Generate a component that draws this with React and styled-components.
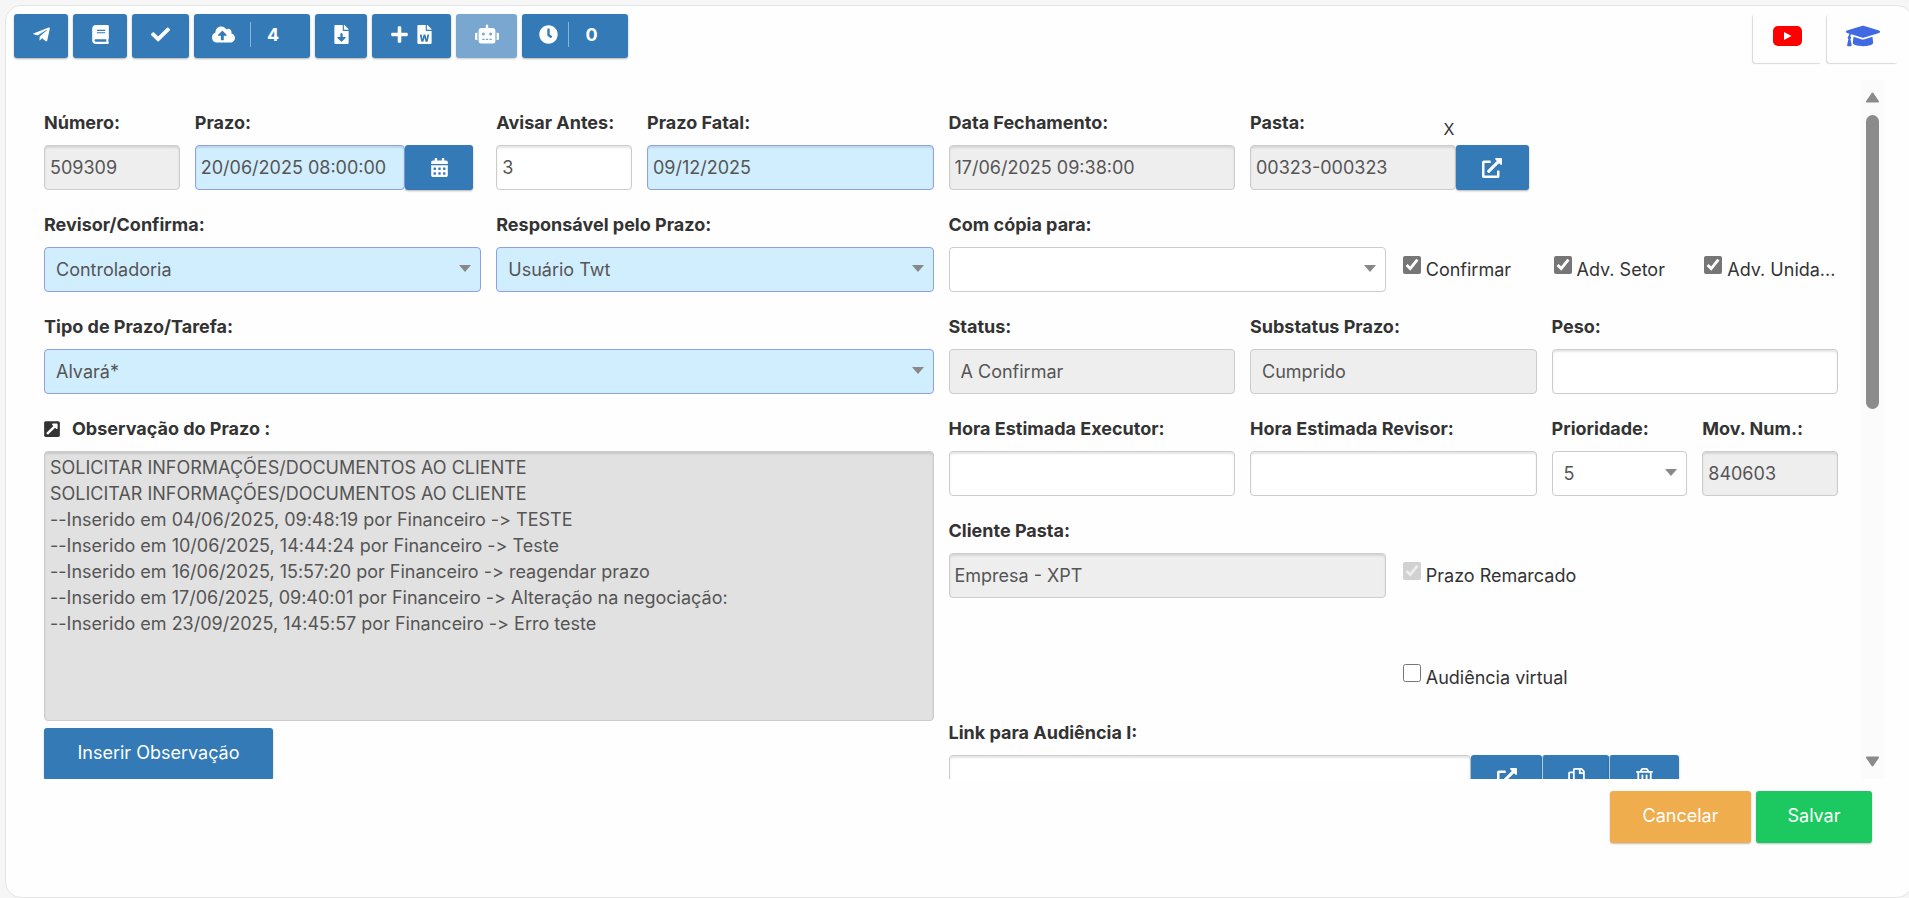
import React, { useState } from "react";
import styled, { createGlobalStyle, css } from "styled-components";
import {
  FaBook,
  FaCalendarAlt,
  FaCheck,
  FaClock,
  FaCloudUploadAlt,
  FaExternalLinkAlt,
  FaExternalLinkSquareAlt,
  FaFileDownload,
  FaFileWord,
  FaGraduationCap,
  FaPlus,
  FaRegCopy,
  FaRegTrashAlt,
  FaRobot,
  FaTelegramPlane,
} from "react-icons/fa";

const theme = {
  primary: "#337ab7",
  warning: "#f0ad4e",
  success: "#1bc960",
  textDark: "#333",
  textInput: "#555",
  border: "#ccc",
  requiredBorder: "#8f9fe8",
  requiredBg: "#d1eeff",
  disabledBg: "#eee",
};

const GlobalStyle = createGlobalStyle`
  * {
    box-sizing: border-box;
  }
  body {
    margin: 0;
    background-color: #f6f6f6;
    color: ${theme.textDark};
    font-family: Inter, "Open Sans", sans-serif;
    font-size: 18px;
    line-height: 26px;
  }
  button, input, select, textarea {
    font: inherit;
  }
`;

const Page = styled.div`
  height: 100vh;
  padding: 5px 0 0 5px;
  overflow: hidden;
`;
const Card = styled.main`
  display: flex;
  flex-direction: column;
  height: 100%;
  margin-right: -4px;
  padding-right: 4px;
  background-color: #fefefe;
  border: 1px solid #e4e4e4;
  border-radius: 16px;
`;

const Toolbar = styled.header`
  display: flex;
  justify-content: space-between;
  padding: 8px 10px 0 8px;
`;
const ButtonGroup = styled.div`
  display: flex;
  gap: 5px;
`;
const ToolButton = styled.button`
  display: flex;
  align-items: center;
  justify-content: center;
  gap: ${(props) => props.$gap || 0}px;
  width: ${(props) => props.$width}px;
  height: 44px;
  padding: 0 0 4px;
  border: none;
  border-radius: 3px;
  background-color: ${theme.primary};
  box-shadow: 0 1px 2px rgba(0, 0, 0, 0.3);
  color: #fff;
  cursor: pointer;
  &:disabled {
    opacity: 0.65;
  }
`;
const Counter = styled.span`
  display: flex;
  align-items: center;
  height: 25px;
  padding: 2px 13px 0 16px;
  border-left: 1px solid #8bb3d6;
  font-weight: 700;
`;
const HelpLink = styled.a`
  display: flex;
  align-items: center;
  justify-content: center;
  width: ${(props) => props.$width}px;
  height: 49px;
  padding-bottom: 5px;
  border-radius: 3px;
  box-shadow: -1px 1px 1px rgba(0, 0, 0, 0.15);
  color: #4169e1;
`;

const Body = styled.div`
  display: flex;
  flex: 1;
  min-height: 0;
  margin-top: 17px;
  padding-right: 24px;
`;
const Form = styled.form`
  display: grid;
  grid-template-columns: 1fr 1fr;
  column-gap: 15px;
  flex: 1;
  align-items: start;
  padding: 30px 23px 0 38px;
  overflow: hidden;
`;
const Half = styled.div`
  display: grid;
  grid-template-columns: repeat(6, minmax(0, 1fr));
  gap: 22px 15px;
`;
const Field = styled.div`
  grid-column: span ${(props) => props.$span};
`;
const LabelRow = styled.div`
  display: flex;
  align-items: center;
  height: 26px;
  margin-bottom: 9px;
`;
const Label = styled.label`
  font-weight: 700;
  white-space: nowrap;
`;
const ClearButton = styled.button`
  align-self: flex-end;
  height: 14px;
  margin-left: auto;
  margin-right: 82px;
  padding: 0;
  border: none;
  background: none;
  color: ${theme.textDark};
  font-size: 16px;
  line-height: 14px;
  cursor: pointer;
`;

const control = css`
  display: block;
  width: 100%;
  min-width: 0;
  height: 45px;
  border: 1px solid ${(props) => (props.$required ? theme.requiredBorder : theme.border)};
  border-radius: 4px;
  background-color: ${(props) => (props.$required ? theme.requiredBg : "#fff")};
  color: ${theme.textInput};
  opacity: 1;
  outline: none;
  &:disabled {
    background-color: ${theme.disabledBg};
  }
`;
const Input = styled.input`
  ${control}
  padding: 0 5px;
  box-shadow: inset 0 2px 2px rgba(0, 0, 0, 0.1);
`;
const Select = styled.select`
  ${control}
  padding: 0 26px 0 11px;
  appearance: none;
`;
const SelectWrapper = styled.div`
  position: relative;
  &::after {
    content: "";
    display: ${(props) => (props.$plain ? "none" : "block")};
    position: absolute;
    top: 18px;
    right: 10px;
    border: 6px solid transparent;
    border-top: 7px solid #888;
    border-bottom: none;
    pointer-events: none;
  }
`;
const TextArea = styled.textarea`
  ${control}
  height: 270px;
  padding: 3px 5px;
  box-shadow: inset 0 2px 2px rgba(0, 0, 0, 0.1);
  font-feature-settings: "calt" 0;
  resize: none;
  &:disabled {
    background-color: #e1e1e1;
  }
`;
const InputGroup = styled.div`
  display: flex;
  margin-right: 8px;
`;
const GroupButton = styled.button`
  display: flex;
  flex: none;
  align-items: center;
  justify-content: center;
  width: ${(props) => props.$width}px;
  height: 45px;
  padding: 0;
  border: none;
  border-radius: 3px;
  background-color: ${theme.primary};
  box-shadow: 0 1px 2px rgba(0, 0, 0, 0.3);
  color: #fff;
  cursor: pointer;
  & + & {
    border-left: 1px solid #b5cfe5;
  }
`;
const ExpandIcon = styled(FaExternalLinkSquareAlt)`
  flex: none;
  margin-left: -1px;
  margin-right: 11px;
`;

const CheckField = styled.div`
  display: flex;
  align-items: flex-start;
  grid-column: ${(props) => props.$start || "auto"} / span ${(props) => props.$span};
  height: 78px;
  padding-top: 44px;
`;
const CheckBox = styled.input`
  flex: none;
  width: 18px;
  height: 18px;
  margin: 0 5px 0 2px;
  accent-color: #767676;
`;
const CheckLabel = styled.label`
  padding-top: 1px;
  white-space: nowrap;
`;

const ActionButton = styled.button`
  min-width: ${(props) => props.$width}px;
  height: 52px;
  padding: 0 24px 2px;
  border: none;
  border-radius: 3px;
  background-color: ${(props) => theme[props.$color]};
  box-shadow: 0 1px 2px rgba(0, 0, 0, 0.25);
  color: #fff;
  cursor: pointer;
`;
const InsertButton = styled(ActionButton)`
  margin-top: 7px;
`;
const Footer = styled.footer`
  display: flex;
  justify-content: flex-end;
  gap: 5px;
  padding: 12px 36px 54px;
`;

const ScrollTrack = styled.div`
  display: flex;
  flex-direction: column;
  align-items: center;
  width: 23px;
  padding: 12px 0;
  background-color: #fbfbfb;
`;
const ScrollThumb = styled.div`
  width: 13px;
  height: 294px;
  margin: 12px 0 auto;
  border-radius: 7px;
  background-color: #8b8b8b;
`;

const ScrollArrow = ({ down }) => (
  <svg width="15" height="11" viewBox="0 0 15 11" aria-hidden="true">
    <path
      d={down ? "M2 1.5h11L7.5 9.5z" : "M2 9.5h11L7.5 1.5z"}
      fill="#8b8b8b"
      stroke="#8b8b8b"
      strokeWidth="2"
      strokeLinejoin="round"
    />
  </svg>
);

const YoutubeIcon = () => (
  <svg width="29" height="20" viewBox="0 0 29 20" aria-hidden="true">
    <rect width="29" height="20" rx="5" fill="#f00" />
    <path d="M11 6v8l7.5-4z" fill="#fff" />
  </svg>
);

const TextField = ({ id, label, span, value = "", ...rest }) => (
  <Field $span={span}>
    <LabelRow>
      <Label htmlFor={id}>{label}</Label>
    </LabelRow>
    <Input id={id} type="text" defaultValue={value} {...rest} />
  </Field>
);

const SelectField = ({ id, label, span, value = "", ...rest }) => (
  <Field $span={span}>
    <LabelRow>
      <Label htmlFor={id}>{label}</Label>
    </LabelRow>
    <SelectWrapper $plain={rest.disabled}>
      <Select id={id} {...rest}>
        <option>{value}</option>
      </Select>
    </SelectWrapper>
  </Field>
);

const Check = ({ id, label, span = 1, start, ...rest }) => (
  <CheckField $span={span} $start={start}>
    <CheckBox id={id} type="checkbox" {...rest} />
    <CheckLabel htmlFor={id}>{label}</CheckLabel>
  </CheckField>
);

const notes = [
  "SOLICITAR INFORMAÇÕES/DOCUMENTOS AO CLIENTE",
  "SOLICITAR INFORMAÇÕES/DOCUMENTOS AO CLIENTE",
  "--Inserido em 04/06/2025, 09:48:19 por Financeiro -> TESTE",
  "--Inserido em 10/06/2025, 14:44:24 por Financeiro -> Teste",
  "--Inserido em 16/06/2025, 15:57:20 por Financeiro -> reagendar prazo",
  "--Inserido em 17/06/2025, 09:40:01 por Financeiro -> Alteração na negociação:",
  "--Inserido em 23/09/2025, 14:45:57 por Financeiro -> Erro teste",
];

const App = () => {
  const [folder, setFolder] = useState("00323-000323");

  return (
    <Page>
      <GlobalStyle />
      <Card>
        <Toolbar>
          <ButtonGroup>
            <ToolButton $width={54} aria-label="Enviar">
              <FaTelegramPlane size={19} />
            </ToolButton>
            <ToolButton $width={54} aria-label="Livro">
              <FaBook size={19} />
            </ToolButton>
            <ToolButton $width={57} aria-label="Confirmar prazo">
              <FaCheck size={19} />
            </ToolButton>
            <ToolButton $width={116} $gap={15}>
              <FaCloudUploadAlt size={23} />
              <Counter>4</Counter>
            </ToolButton>
            <ToolButton $width={52} aria-label="Baixar">
              <FaFileDownload size={19} />
            </ToolButton>
            <ToolButton $width={79} $gap={6} aria-label="Novo documento">
              <FaPlus size={19} />
              <FaFileWord size={19} />
            </ToolButton>
            <ToolButton $width={61} disabled aria-label="Robô">
              <FaRobot size={24} />
            </ToolButton>
            <ToolButton $width={106} $gap={10}>
              <FaClock size={19} />
              <Counter>0</Counter>
            </ToolButton>
          </ButtonGroup>
          <ButtonGroup>
            <HelpLink href="#video" $width={69} aria-label="Vídeo">
              <YoutubeIcon />
            </HelpLink>
            <HelpLink href="#curso" $width={71} aria-label="Curso">
              <FaGraduationCap size={34} />
            </HelpLink>
          </ButtonGroup>
        </Toolbar>

        <Body>
          <Form>
            <Half>
              <TextField id="numero" label="Número:" span={1} value="509309" disabled />
              <Field $span={2}>
                <LabelRow>
                  <Label htmlFor="prazo">Prazo:</Label>
                </LabelRow>
                <InputGroup>
                  <Input id="prazo" defaultValue="20/06/2025 08:00:00" $required />
                  <GroupButton type="button" $width={68} aria-label="Calendário">
                    <FaCalendarAlt size={19} />
                  </GroupButton>
                </InputGroup>
              </Field>
              <TextField id="avisar" label="Avisar Antes:" span={1} value="3" />
              <TextField id="fatal" label="Prazo Fatal:" span={2} value="09/12/2025" $required />

              <SelectField id="revisor" label="Revisor/Confirma:" span={3} value="Controladoria" $required />
              <SelectField id="responsavel" label="Responsável pelo Prazo:" span={3} value="Usuário Twt" $required />
              <SelectField id="tipo" label="Tipo de Prazo/Tarefa:" span={6} value="Alvará*" $required />

              <Field $span={6}>
                <LabelRow>
                  <ExpandIcon size={18} />
                  <Label htmlFor="observacao">Observação do Prazo :</Label>
                </LabelRow>
                <TextArea id="observacao" defaultValue={notes.join("\n")} disabled />
                <InsertButton type="button" $color="primary" $width={229}>
                  Inserir Observação
                </InsertButton>
              </Field>
            </Half>

            <Half>
              <TextField id="fechamento" label="Data Fechamento:" span={2} value="17/06/2025 09:38:00" disabled />
              <Field $span={2}>
                <LabelRow>
                  <Label htmlFor="pasta">Pasta:</Label>
                  <ClearButton type="button" onClick={() => setFolder("")}>
                    X
                  </ClearButton>
                </LabelRow>
                <InputGroup>
                  <Input id="pasta" value={folder} readOnly disabled />
                  <GroupButton type="button" $width={73} aria-label="Abrir pasta">
                    <FaExternalLinkAlt size={20} />
                  </GroupButton>
                </InputGroup>
              </Field>
              <Field $span={2} />

              <SelectField id="copia" label="Com cópia para:" span={3} />
              <Check id="confirmar" label="Confirmar" defaultChecked />
              <Check id="setor" label="Adv. Setor" defaultChecked />
              <Check id="unidade" label="Adv. Unida..." defaultChecked />

              <SelectField id="status" label="Status:" span={2} value="A Confirmar" disabled />
              <SelectField id="substatus" label="Substatus Prazo:" span={2} value="Cumprido" disabled />
              <TextField id="peso" label="Peso:" span={2} />

              <TextField id="executor" label="Hora Estimada Executor:" span={2} />
              <TextField id="horaRevisor" label="Hora Estimada Revisor:" span={2} />
              <SelectField id="prioridade" label="Prioridade:" span={1} value="5" />
              <TextField id="mov" label="Mov. Num.:" span={1} value="840603" disabled />

              <TextField id="cliente" label="Cliente Pasta:" span={3} value="Empresa - XPT" disabled />
              <Check id="remarcado" label="Prazo Remarcado" span={3} defaultChecked disabled />
              <Check id="virtual" label="Audiência virtual" start={4} span={3} />

              <Field $span={5}>
                <LabelRow>
                  <Label htmlFor="link">Link para Audiência I:</Label>
                </LabelRow>
                <InputGroup>
                  <Input id="link" />
                  <GroupButton type="button" $width={71} aria-label="Abrir link">
                    <FaExternalLinkAlt size={20} />
                  </GroupButton>
                  <GroupButton type="button" $width={67} aria-label="Copiar link">
                    <FaRegCopy size={19} />
                  </GroupButton>
                  <GroupButton type="button" $width={70} aria-label="Excluir link">
                    <FaRegTrashAlt size={19} />
                  </GroupButton>
                </InputGroup>
              </Field>
            </Half>
          </Form>
          <ScrollTrack>
            <ScrollArrow />
            <ScrollThumb />
            <ScrollArrow down />
          </ScrollTrack>
        </Body>

        <Footer>
          <ActionButton type="button" $color="warning" $width={141}>
            Cancelar
          </ActionButton>
          <ActionButton type="button" $color="success" $width={116}>
            Salvar
          </ActionButton>
        </Footer>
      </Card>
    </Page>
  );
};

export default App;
